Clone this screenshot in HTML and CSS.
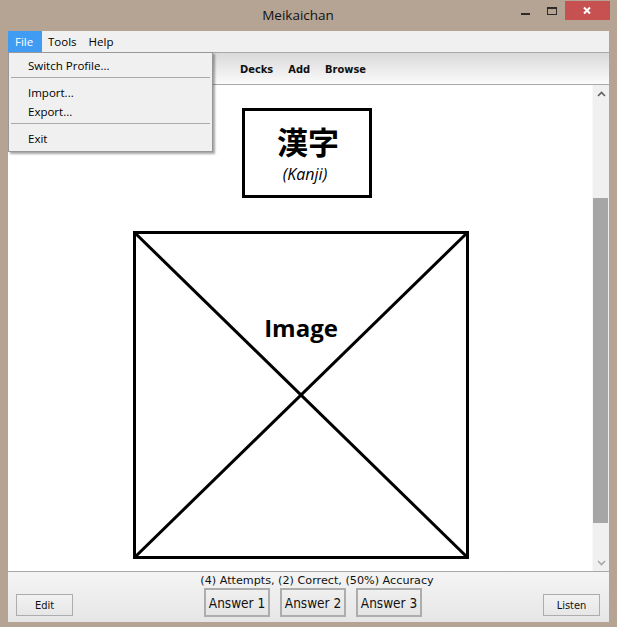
FILE: index.html
```html
<!DOCTYPE html>
<html lang="en">
<head>
<meta charset="utf-8">
<title>Meikaichan</title>
<link rel="stylesheet" href="styles.css">
</head>
<body>
<div class="window">
  <div class="titlebar">
    <span class="title">Meikaichan</span>
    <svg class="controls" width="96" height="20" viewBox="0 0 96 20">
      <rect x="7" y="12" width="9" height="2" fill="#2b2b2b"/>
      <rect x="33.5" y="6.5" width="9" height="7" fill="none" stroke="#2b2b2b" stroke-width="1"/>
      <rect x="33" y="6" width="10" height="2" fill="#2b2b2b"/>
      <rect x="51" y="0" width="45" height="19" fill="#c75050"/>
      <path d="M70 6.5 L76 12.5 M76 6.5 L70 12.5" stroke="#fff" stroke-width="2"/>
    </svg>
  </div>
  <div class="client">
    <div class="menubar">
      <span class="menu-item active">File</span>
      <span class="menu-item">Tools</span>
      <span class="menu-item">Help</span>
    </div>
    <div class="toolbar">
      <span class="tool">Decks</span>
      <span class="tool">Add</span>
      <span class="tool">Browse</span>
    </div>
    <div class="main">
      <div class="view">
        <div class="kanji-card">
          <div class="kanji">漢字</div>
          <div class="reading">(Kanji)</div>
        </div>
        <div class="image-box">
          <svg class="cross" viewBox="0 0 330 322" preserveAspectRatio="none">
            <line x1="0" y1="0" x2="330" y2="322" stroke="#000" stroke-width="3"/>
            <line x1="330" y1="0" x2="0" y2="322" stroke="#000" stroke-width="3"/>
          </svg>
          <div class="image-label">Image</div>
        </div>
      </div>
      <div class="scrollbar">
        <div class="sb-btn">
          <svg width="9" height="6" viewBox="0 0 9 6"><path d="M1 5 L4.5 1.5 L8 5" fill="none" stroke="#606060" stroke-width="1.6"/></svg>
        </div>
        <div class="sb-track"><div class="sb-thumb"></div></div>
        <div class="sb-btn">
          <svg width="9" height="6" viewBox="0 0 9 6"><path d="M1 1 L4.5 4.5 L8 1" fill="none" stroke="#a8a8a8" stroke-width="1.6"/></svg>
        </div>
      </div>
    </div>
    <div class="bottom">
      <button class="side-btn">Edit</button>
      <div class="center">
        <div class="stats">(4) Attempts, (2) Correct, (50%) Accuracy</div>
        <div class="answers">
          <button class="answer">Answer 1</button>
          <button class="answer">Answer 2</button>
          <button class="answer">Answer 3</button>
        </div>
      </div>
      <button class="side-btn">Listen</button>
    </div>
  </div>
  <div class="dropdown">
    <div class="dd-item">Switch Profile...</div>
    <div class="dd-sep"></div>
    <div class="dd-item">Import...</div>
    <div class="dd-item">Export...</div>
    <div class="dd-sep"></div>
    <div class="dd-item">Exit</div>
  </div>
</div>
</body>
</html>
```

FILE: styles.css
```css
* { box-sizing: border-box; }
html, body { margin: 0; padding: 0; }
body {
  width: 617px;
  height: 627px;
  background: #b5a493;
  font-family: "Open Sans", "Noto Sans", sans-serif;
  overflow: hidden;
}
.window {
  position: relative;
  width: 617px;
  height: 627px;
  background: #b5a493;
}
.titlebar {
  height: 31px;
  display: flex;
  align-items: flex-start;
}
.title {
  flex: 1;
  text-align: center;
  padding-left: 82px;
  padding-top: 5px;
  font-size: 13.5px;
  line-height: 20px;
  color: #111;
}
.controls {
  margin-top: 1px;
  margin-right: 7px;
  display: block;
}
.client {
  margin-left: 8px;
  width: 601px;
  height: 591px;
  display: flex;
  flex-direction: column;
  background: #f0f0f0;
}
.menubar {
  height: 22px;
  display: flex;
  background: #f0f0f0;
  border-bottom: 1px solid #a8a8a8;
  font-size: 11.5px;
}
.menu-item {
  height: 21px;
  line-height: 21px;
  padding: 0 6px;
  color: #000;
}
.menu-item.active {
  width: 34px;
  padding: 0 0 0 7px;
  background: #3f9cf2;
  color: #fff;
}
.toolbar {
  height: 32px;
  display: flex;
  align-items: center;
  justify-content: center;
  gap: 15px;
  padding-left: 6px;
  padding-right: 17px;
  padding-top: 1px;
  background: linear-gradient(#d9d9d9, #fbfbfb);
  border-bottom: 1px solid #a8a8a8;
  font-family: "DejaVu Sans Condensed", "DejaVu Sans", sans-serif;
  font-stretch: condensed;
  font-weight: bold;
  font-size: 11px;
  color: #111;
}
.main {
  height: 486px;
  display: flex;
}
.view {
  flex: 1;
  background: #fff;
  display: flex;
  flex-direction: column;
  align-items: flex-start;
  overflow: hidden;
}
.kanji-card {
  margin: 23px 0 0 234px;
  width: 130px;
  height: 90px;
  border: 3px solid #000;
  display: flex;
  flex-direction: column;
  align-items: center;
  padding-top: 13px;
}
.kanji {
  font-family: "Noto Sans CJK JP", "Noto Sans CJK SC", sans-serif;
  font-weight: bold;
  font-size: 31px;
  line-height: 34px;
  padding-left: 2px;
}
.reading {
  font-style: italic;
  font-size: 16px;
  line-height: 20px;
  margin-top: 6px;
  padding-right: 4px;
}
.image-box {
  position: relative;
  margin: 33px 0 0 125px;
  width: 336px;
  height: 328px;
  border: 3px solid #000;
}
.cross {
  position: absolute;
  left: 0;
  top: 0;
  width: 330px;
  height: 322px;
}
.image-label {
  position: relative;
  padding-top: 78px;
  text-align: center;
  font-weight: bold;
  font-size: 24px;
  line-height: 32px;
  color: #000;
}
.scrollbar {
  width: 17px;
  display: flex;
  flex-direction: column;
  background: #f0f0f0;
  border-left: 1px solid #f8f8f8;
}
.sb-btn {
  height: 17px;
  display: flex;
  align-items: center;
  justify-content: center;
}
.sb-track {
  flex: 1;
  padding-top: 96px;
}
.sb-thumb {
  width: 15px;
  height: 325px;
  background: #a6a6a6;
}
.bottom {
  flex: 1;
  display: flex;
  align-items: flex-start;
  padding: 1px 9px 0 8px;
  border-top: 1px solid #a8a8a8;
  background: linear-gradient(#f4f4f4, #e6e6e6);
  font-family: "DejaVu Sans Condensed", "DejaVu Sans", sans-serif;
  font-stretch: condensed;
}
.side-btn {
  margin-top: 21px;
  width: 57px;
  height: 22px;
  border: 1px solid #adadad;
  background: linear-gradient(#f2f2f2, #e6e6e6);
  font-family: inherit;
  font-stretch: condensed;
  font-size: 11px;
  color: #111;
  padding: 0;
}
.center {
  flex: 1;
  display: flex;
  flex-direction: column;
  align-items: center;
  padding-left: 10px;
}
.stats {
  font-family: "DejaVu Sans", sans-serif;
  font-stretch: normal;
  font-size: 11.2px;
  line-height: 15px;
  color: #111;
  padding-left: 8px;
}
.answers {
  display: flex;
  gap: 10px;
}
.answer {
  height: 29px;
  width: 66px;
  border: 2px solid #adadad;
  background: linear-gradient(#f0f0f0, #e4e4e4);
  font-family: inherit;
  font-stretch: condensed;
  font-size: 13.5px;
  color: #111;
  padding: 0;
}
.dropdown {
  position: absolute;
  left: 8px;
  top: 52px;
  width: 205px;
  padding: 3px 2px 3px 2px;
  background: #f0f0f0;
  border: 1px solid #979797;
  box-shadow: 2px 2px 2px rgba(0, 0, 0, 0.35);
  font-size: 11.5px;
  color: #000;
}
.dd-item {
  height: 19px;
  line-height: 19px;
  padding-left: 17px;
}
.dd-sep {
  height: 8px;
  padding-top: 2px;
}
.dd-sep::before {
  content: "";
  display: block;
  height: 1px;
  background: #a9a9a9;
}
```
